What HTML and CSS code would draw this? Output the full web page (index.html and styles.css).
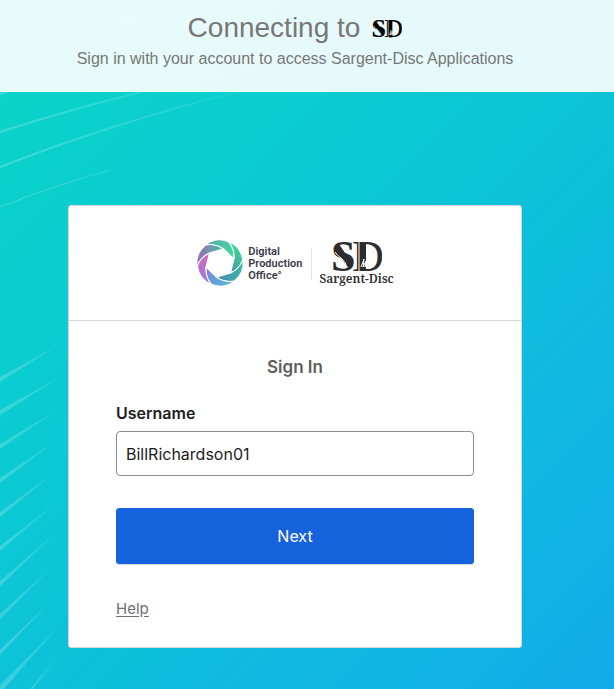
FILE: index.html
```html
<!DOCTYPE html>
<html lang="en">
<head>
<meta charset="utf-8">
<meta name="viewport" content="width=device-width, initial-scale=1">
<title>Sign In</title>
<link rel="stylesheet" href="styles.css">
</head>
<body>
<div class="page">
  <svg class="rays" width="300" height="689" viewBox="0 0 300 689" aria-hidden="true">
    <defs>
      <linearGradient id="fadeShort" gradientUnits="userSpaceOnUse" x1="0" y1="0" x2="60" y2="0">
        <stop offset="0" stop-color="#fff" stop-opacity=".2"/>
        <stop offset="1" stop-color="#fff" stop-opacity=".12"/>
      </linearGradient>
      <linearGradient id="fadeLong" gradientUnits="userSpaceOnUse" x1="0" y1="0" x2="240" y2="0">
        <stop offset="0" stop-color="#fff" stop-opacity=".22"/>
        <stop offset="1" stop-color="#fff" stop-opacity=".04"/>
      </linearGradient>
    </defs>
    <g fill="none" stroke="url(#fadeLong)" stroke-width="2">
      <path d="M0 56Q80 30 210 0"/>
      <path d="M0 94Q90 63 240 28"/>
      <path d="M0 132Q68 110 145 91T260 66"/>
      <path d="M0 167Q110 124 240 91"/>
      <path d="M0 207Q50 187 110 170" stroke-width="1"/>
    </g>
    <g fill="url(#fadeShort)">
      <path d="M0 377L60 344L0 382z"/>
      <path d="M0 410L60 377L0 415z"/>
      <path d="M0 444L57 410L0 449z"/>
      <path d="M0 478L56 441L0 483z"/>
      <path d="M0 512L54 473L0 517z"/>
      <path d="M0 546L55 504L0 551z"/>
      <path d="M0 581L58 531L0 586z"/>
      <path d="M0 614L50 569L0 619z"/>
      <path d="M0 650L50 602L0 655z"/>
      <path d="M0 685L56 629L4 689L0 689z"/>
      <path d="M30 689L56 658L33 689z"/>
    </g>
  </svg>

  <header class="banner">
    <div class="banner-title">
      <h1>Connecting to</h1>
      <svg class="monogram" width="30" height="19" viewBox="0 0 50 32" role="img" aria-label="SD">
        <use href="#sd"/>
      </svg>
    </div>
    <p>Sign in with your account to access Sargent-Disc Applications</p>
  </header>

  <main class="content">
    <section class="card">
      <div class="card-brand">
        <svg width="48" height="48" viewBox="-24 -24 48 48" aria-hidden="true">
          <defs>
            <linearGradient id="b1"><stop offset="0" stop-color="#9a6cb6"/><stop offset="1" stop-color="#45c0a4"/></linearGradient>
            <linearGradient id="b2"><stop offset="0" stop-color="#56b5aa"/><stop offset="1" stop-color="#3fdf98"/></linearGradient>
            <linearGradient id="b3"><stop offset="0" stop-color="#3cd79a"/><stop offset="1" stop-color="#47959e"/></linearGradient>
            <linearGradient id="b4"><stop offset="0" stop-color="#3db8a4"/><stop offset="1" stop-color="#4488b4"/></linearGradient>
            <linearGradient id="b5"><stop offset="0" stop-color="#55b4d8"/><stop offset="1" stop-color="#7f7fd6"/></linearGradient>
            <linearGradient id="b6"><stop offset="0" stop-color="#a07adb"/><stop offset="1" stop-color="#d968b4"/></linearGradient>
            <path id="blade" d="M-11 -10Q-19 -6 -23 3A23 23 0 0 1 -14 -18Q-4 -20 3 -14z"/>
          </defs>
          <g stroke="#fff" stroke-width="1">
            <use href="#blade" fill="url(#b1)"/>
            <use href="#blade" fill="url(#b2)" transform="rotate(60)"/>
            <use href="#blade" fill="url(#b3)" transform="rotate(120)"/>
            <use href="#blade" fill="url(#b4)" transform="rotate(180)"/>
            <use href="#blade" fill="url(#b5)" transform="rotate(240)"/>
            <use href="#blade" fill="url(#b6)" transform="rotate(300)"/>
          </g>
        </svg>
        <p class="office">Digital<br>Production<br>Office°</p>
        <div class="sargent">
          <svg width="50" height="32" viewBox="0 0 50 32" role="img" aria-label="SD">
            <g id="sd">
              <text class="sd-letter sd-s" x="-1" y="31">S</text>
              <path d="M6 8L17 24" stroke="currentColor" stroke-width="6" stroke-linecap="round"/>
              <path d="M3 12Q6 16 10 19T15 28" fill="none" stroke="#fff" stroke-width="1"/>
              <text class="sd-letter" x="20" y="31">D</text>
              <path d="M28 2h6v29h-6z"/>
              <path d="M27 0v32" stroke="#fff" stroke-width="1"/>
              <path d="M29 27l3-8-1 8 3-6-1 6 3-7" fill="none" stroke="#fff" stroke-width="1"/>
            </g>
          </svg>
          <span>Sargent-Disc</span>
        </div>
      </div>
      <form class="signin">
        <h2>Sign In</h2>
        <label for="username">Username</label>
        <input id="username" type="text" value="BillRichardson01">
        <button type="button">Next</button>
        <a href="#help">Help</a>
      </form>
    </section>
  </main>
</div>
</body>
</html>
```

FILE: styles.css
```css
* {
  box-sizing: border-box;
}

body {
  margin: 0;
  font-family: Inter, "Liberation Sans", sans-serif;
  color: #1d1d21;
}

h1, h2, p {
  margin: 0;
  font-weight: 400;
}

.page {
  position: relative;
  min-height: 100vh;
  background: linear-gradient(135deg, #0ad5c6 0%, #0bcbd1 34%, #0fb9e0 74%, #12abea 100%);
}

.rays {
  position: absolute;
  top: 0;
  left: 0;
}

.banner {
  position: relative;
  height: 92px;
  padding: 12px 24px 0 0;
  background: rgba(255, 255, 255, 0.9);
  color: #777;
  font-family: "Liberation Sans", sans-serif;
  text-align: center;
}

.banner-title {
  display: flex;
  justify-content: center;
  align-items: center;
  gap: 12px;
}

.banner h1 {
  font-size: 28px;
  line-height: 32px;
}

.banner p {
  font-size: 16px;
  line-height: 20px;
  padding-top: 5px;
}

.content {
  position: relative;
  padding: 113px 24px 40px 0;
}

.card {
  max-width: 454px;
  margin: 0 auto;
  background: #fff;
  border: 1px solid #d8d8d8;
  border-radius: 3px;
}

.card-brand {
  display: flex;
  justify-content: center;
  align-items: center;
  height: 115px;
  border-bottom: 1px solid #d8d8d8;
}

.office {
  padding: 2px 9px 0 4px;
  font: 600 11px/12px Roboto, sans-serif;
  color: #3a3a4c;
}

.sargent {
  display: flex;
  flex-direction: column;
  align-items: center;
  position: relative;
  padding-left: 8px;
  color: #2d2d2d;
  font: 600 12px/14px "Noto Serif", "DejaVu Serif", "Liberation Serif", serif;
}

.sargent::before {
  content: "";
  position: absolute;
  left: 0;
  top: 8px;
  height: 32px;
  border-left: 1px solid #e4e4e8;
}

.sargent svg {
  fill: #2d2d2d;
}

.monogram {
  color: #000;
  fill: #000;
}

.sd-letter {
  font: 400 44px "Liberation Serif", serif;
}

.sd-s {
  font-weight: 700;
}

.signin {
  display: flex;
  flex-direction: column;
  padding: 34px 47px 28px;
}

.signin h2 {
  font-size: 17px;
  line-height: 24px;
  font-weight: 600;
  color: #5e5e5e;
  text-align: center;
}

.signin label {
  margin-top: 24px;
  font-size: 16px;
  line-height: 20px;
  font-weight: 600;
}

.signin input {
  width: 100%;
  height: 45px;
  margin-top: 8px;
  padding: 0 9px;
  border: 1px solid #8c8c96;
  border-radius: 4px;
  background: #fff;
  color: #1d1d21;
  font: 400 16px Inter, sans-serif;
}

.signin button {
  height: 56px;
  margin-top: 32px;
  border: 1px solid #1662dd;
  border-radius: 3px;
  background: #1662dd;
  color: #fff;
  font: 400 16px Inter, sans-serif;
  box-shadow: 0 1px 0 #d5d5dc;
}

.signin a {
  align-self: flex-start;
  margin-top: 35px;
  font-size: 15px;
  line-height: 20px;
  color: #6e6e78;
  text-underline-offset: 2px;
}
```
